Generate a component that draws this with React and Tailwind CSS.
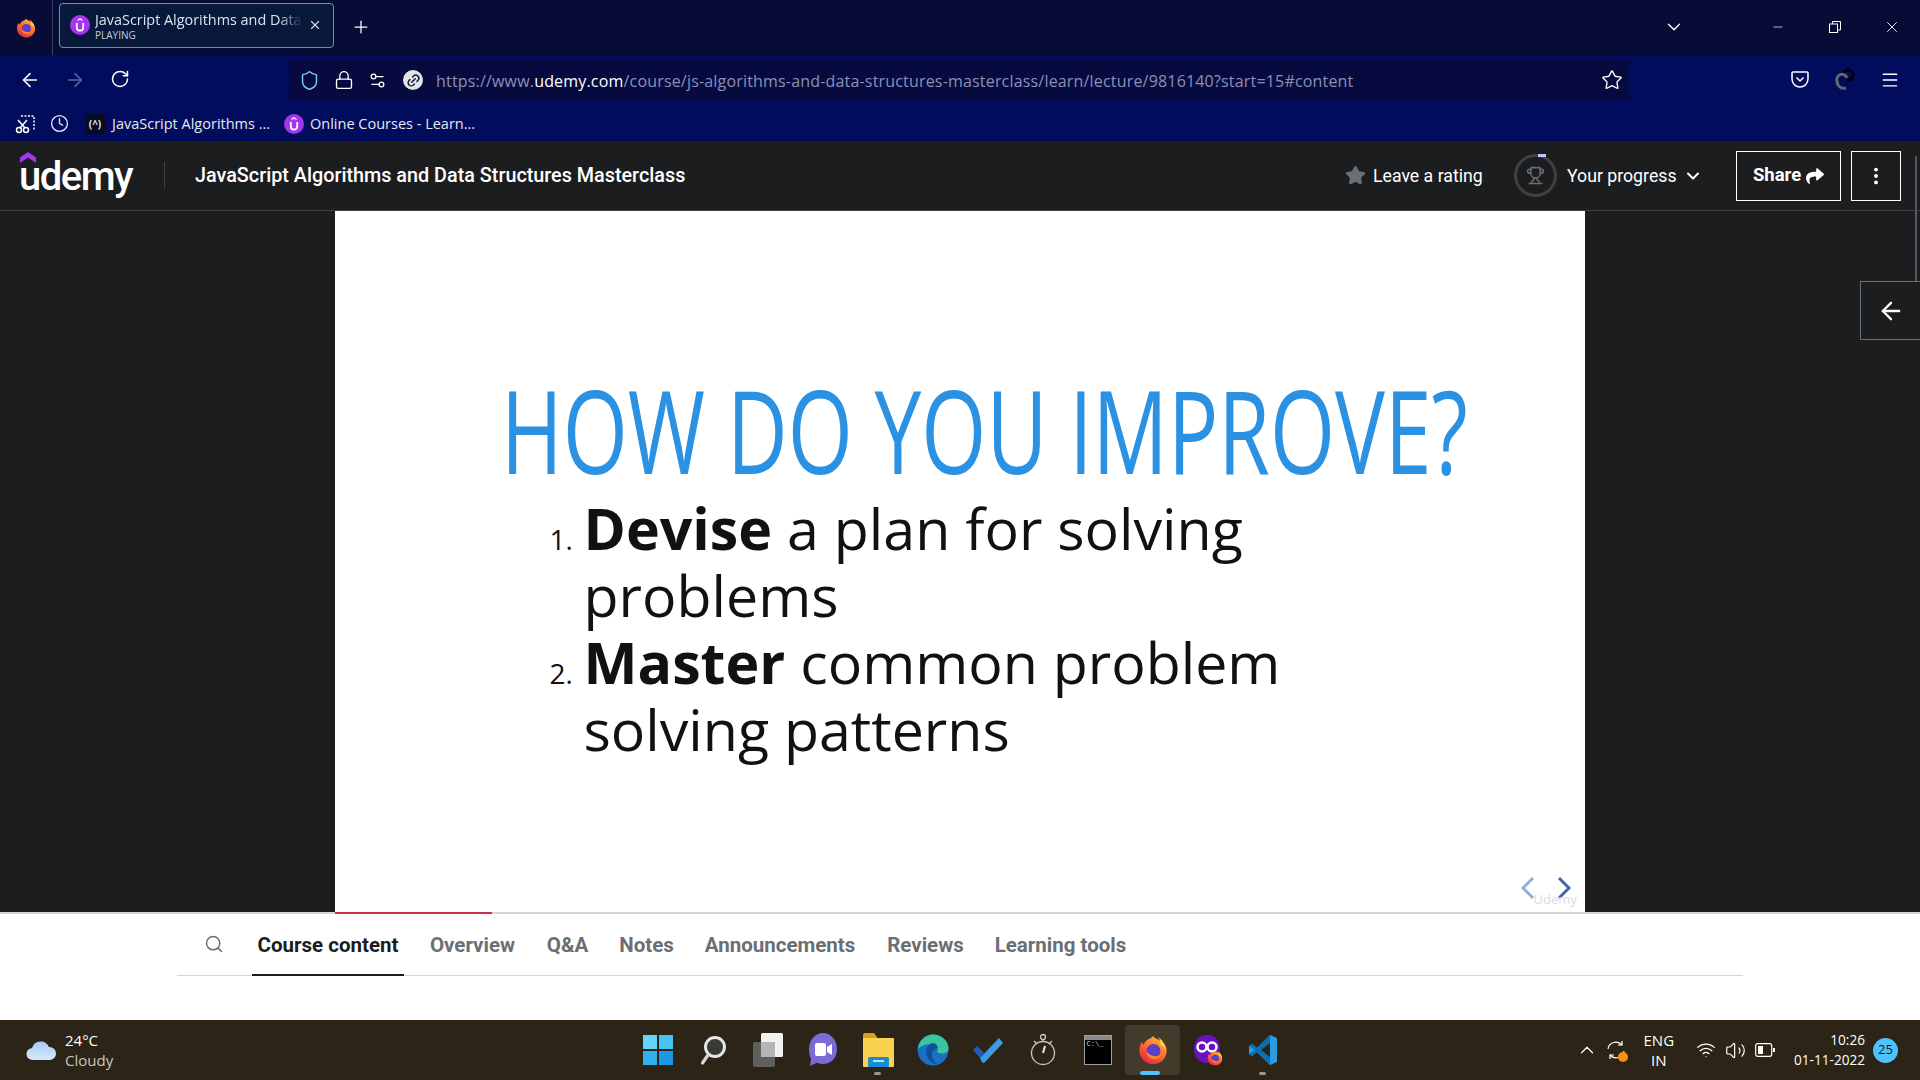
import React from "react";
import {
  ArrowLeft,
  ArrowRight,
  RotateCw,
  Shield,
  Lock,
  Star,
  Menu,
  ChevronDown,
  ChevronUp,
  X,
  Plus,
  Minus,
  Search,
  Trophy,
  EllipsisVertical,
  Wifi,
  Volume2,
  Link2,
  Clock,
  Settings2,
} from "lucide-react";
import { FaShare } from "react-icons/fa";

const tabs = [
  { label: "Course content", width: "w-[152px]", active: true },
  { label: "Overview", width: "w-[87px]", gap: "ml-[25px]" },
  { label: "Q&A", width: "w-[43px]", gap: "ml-[30px]" },
  { label: "Notes", width: "w-[55px]", gap: "ml-[30px]" },
  { label: "Announcements", width: "w-[154px]", gap: "ml-[29px]" },
  { label: "Reviews", width: "w-[77px]", gap: "ml-[30px]" },
  { label: "Learning tools", width: "w-[133px]", gap: "ml-[30px]" },
];

// Purple udemy favicon used in tab and bookmark bar
const UdemyDot = () => (
  <div className="w-5 h-5 rounded-full bg-[#a435f0] flex items-center justify-center shrink-0">
    <svg width="10" height="14" viewBox="0 0 10 14" fill="none" stroke="white">
      <path d="M2.500 2.500 5 .8l2.500 1.700" strokeWidth="1.200" />
      <path d="M1.800 5v4.500a3.200 3.200 0 0 0 6.400 0V5" strokeWidth="1.800" />
    </svg>
  </div>
);

const SnipIcon = () => (
  <svg width="20" height="20" viewBox="0 0 20 20" fill="none" stroke="white" strokeWidth="1.500">
    <path d="M6 2h13v15" strokeDasharray="2 1.500" />
    <circle cx="4" cy="16" r="2.500" />
    <circle cx="11" cy="16" r="2.500" />
    <path d="M5 14 12 6M10 14 3 6" />
  </svg>
);

const FirefoxIcon = ({ size = 30 }) => (
  <svg width={size} height={size} viewBox="0 0 32 32">
    <defs>
      <linearGradient id="ffa" x1="0.8" y1="0" x2="0.2" y2="1">
        <stop offset="0" stopColor="#ffbd2e" />
        <stop offset="0.5" stopColor="#ff6a2b" />
        <stop offset="1" stopColor="#e5224b" />
      </linearGradient>
    </defs>
    <path d="M16 31C7.500 31 1.500 24.500 1.500 16.500c0-3.500 1-6.500 2.700-9 .3 1.500.9 2.500 1.700 3 .8-2.500 2.500-4.500 4.800-5.800 1.800-1 3.700-1.500 5.500-3.700 1.200 2.500 5.500 3.500 8.500 5.500 3.800 2.500 5.800 6.500 5.800 10.500C30.500 24.500 24.500 31 16 31z" fill="url(#ffa)" />
    <path d="M21 2c3 3 3.500 6 2.500 8.500 3 1.500 5 2.500 6.500 6-.5-5-3-11-9-14.500z" fill="#ffd43b" />
    <circle cx="16.500" cy="17" r="7.500" fill="#5b3fc4" />
    <path d="M9 17c0 6 5 9.500 10 8.500 3-.6 5.500-3 6-5.500-2 2.500-6 3.500-9.500 2C12 20.500 10 19 9 17z" fill="#ff8a2b" />
  </svg>
);

const WindowsIcon = () => (
  <div className="grid grid-cols-2 gap-[2px] w-[30px] h-[30px]">
    <div className="bg-[#62d6fa]" />
    <div className="bg-[#45c3f5]" />
    <div className="bg-[#2fb0f0]" />
    <div className="bg-[#1b98e6]" />
  </div>
);

const TaskSearchIcon = () => (
  <svg width="30" height="32" viewBox="0 0 30 32" fill="none">
    <circle cx="17" cy="13" r="9.500" fill="#3a3a34" stroke="#e6e6e6" strokeWidth="3" />
    <path d="M10 21 4.500 29" stroke="#d8d8d8" strokeWidth="3.200" strokeLinecap="round" />
  </svg>
);

const TaskViewIcon = () => (
  <svg width="32" height="36" viewBox="0 0 32 36">
    <rect x="9" y="1" width="22" height="24" rx="1.500" fill="#f2f2f2" />
    <rect x="1" y="10" width="22" height="25" rx="1.500" fill="#5f5f5f" />
    <rect x="9" y="10" width="14" height="15" fill="#b5b5b5" />
  </svg>
);

const ChatIcon = () => (
  <svg width="30" height="36" viewBox="0 0 30 36">
    <path d="M15 1c8 0 14 7 14 16s-6 15-14 15c-2 0-4-.4-6-1.300L2 34l1-7C1.500 24 1 20.500 1 17 1 8 7 1 15 1z" fill="#7b6bd6" />
    <rect x="7" y="11" width="11" height="13" rx="2" fill="#fff" />
    <path d="m19 15 5-3v11l-5-3z" fill="#fff" />
  </svg>
);

const ExplorerIcon = () => (
  <svg width="32" height="36" viewBox="0 0 32 36">
    <path d="M1 3a2 2 0 0 1 2-2h9l3 4v8H1z" fill="#d69e1a" />
    <rect x="1" y="6" width="31" height="29" rx="1" fill="#fbd24f" />
    <rect x="6" y="25" width="21" height="10" rx="1.500" fill="#1b8bd8" />
    <rect x="11" y="28" width="11" height="2" fill="#b8e2fb" />
  </svg>
);

const EdgeIcon = () => (
  <svg width="32" height="32" viewBox="0 0 32 32">
    <circle cx="16" cy="16" r="15.500" fill="#1c6fc4" />
    <path d="M1 15C2 6 9 .5 16 .5c8 0 15.500 6 15.500 14 0 3-3 5-6.500 5-3 0-5-1-5-2 2-2 1-6-4-7C10 9.500 4 11 1 15z" fill="#38c6a0" />
    <path d="M16 9c-6 1-8 7-6 13 1.500 4 6 8.500 12 8.500-4-1-7-5-7-10 0-4 3-6 6-7-1-2.500-3-4.500-5-4.500z" fill="#0f4f9c" />
  </svg>
);

const TodoIcon = () => (
  <svg width="32" height="26" viewBox="0 0 32 26">
    <path d="m1 13 4-4 7 7-4 5z" fill="#1c5bb8" />
    <path d="M8 21 27 1l4 5L13 25a2 2 0 0 1-3 0z" fill="#3c9be8" />
  </svg>
);

const TimerIcon = () => (
  <svg width="26" height="34" viewBox="0 0 26 34" fill="none" stroke="#c8c8c8" strokeWidth="1.300">
    <circle cx="13" cy="20" r="11.500" />
    <circle cx="13" cy="4" r="2.500" />
    <path d="M13 7v2M4 8l3 3M22 8l-3 3" />
    <path d="m13 20 2-7" stroke="#e8e8e8" strokeWidth="2" />
  </svg>
);

const CmdIcon = () => (
  <div className="h-[30px] border border-[#9b9b9b] bg-black w-[28px]">
    <div className="h-[4px] bg-[#8a8a8a]" />
    <div className="text-[7px] leading-[9px] text-[#cfcfcf] pl-[2px] font-['Liberation_Mono',monospace]">C:\_</div>
  </div>
);

const MaskIcon = () => (
  <div className="relative w-[30px] h-[32px]">
    <svg width="28" height="30" viewBox="0 0 28 30">
      <path d="M14 1c8 0 13 6 13 14s-5 14-13 14S1 23 1 15 6 1 14 1z" fill="#6a12c0" />
      <circle cx="9" cy="13" r="4.500" fill="none" stroke="#fff" strokeWidth="2.500" />
      <circle cx="19" cy="13" r="4.500" fill="none" stroke="#fff" strokeWidth="2.500" />
    </svg>
    <div className="absolute right-0 bottom-0">
      <FirefoxIcon size={16} />
    </div>
  </div>
);

const VsCodeIcon = () => (
  <svg width="30" height="32" viewBox="0 0 30 32">
    <path d="M22 1 29 4v24l-7 3L9 18l-5 4-3-2v-8l3-2 5 4z" fill="#2a9de0" />
    <path d="M22 1 9 14 4 10l-3 2 6 4-6 4 3 2 5-4 13 13z" fill="#0b6fb8" />
    <path d="M22 9v14l-9-7z" fill="#2c2416" />
  </svg>
);

const taskIcons = [
  { key: "start", node: <WindowsIcon /> },
  { key: "search", node: <TaskSearchIcon /> },
  { key: "view", node: <TaskViewIcon /> },
  { key: "chat", node: <ChatIcon /> },
  { key: "explorer", node: <ExplorerIcon />, dot: true },
  { key: "edge", node: <EdgeIcon /> },
  { key: "todo", node: <TodoIcon /> },
  { key: "timer", node: <TimerIcon /> },
  { key: "cmd", node: <CmdIcon /> },
  { key: "firefox", node: <FirefoxIcon />, active: true },
  { key: "mask", node: <MaskIcon /> },
  { key: "vscode", node: <VsCodeIcon />, dot: true },
];

const BrowserChrome = () => (
  <div className="font-['Open_Sans',sans-serif] text-white">
    {/* title bar */}
    <div className="h-[55px] bg-[#070c36] flex items-center">
      <div className="w-[53px] h-full flex items-center justify-center border-r border-[#3a3e5f]">
        <FirefoxIcon size={20} />
      </div>
      <div className="ml-[6px] w-[275px] h-[45px] rounded-[4px] border border-[#6f8cc9] bg-[#07183a] flex items-center pl-[10px] mb-[5px]">
        <UdemyDot />
        <div className="ml-[5px] w-[208px] overflow-hidden whitespace-nowrap pt-[2px]">
          <div className="text-[14.4px] leading-[18px] text-[#dfe3ee] [mask-image:linear-gradient(to_right,black_88%,transparent)]">JavaScript Algorithms and Data</div>
          <div className="text-[10px] leading-[12px] text-[#c6cbdc]">PLAYING</div>
        </div>
        <X size={14} className="ml-[5px] text-[#d5d8e2]" />
      </div>
      <Plus size={20} strokeWidth={1.500} className="ml-[17px] mb-[2px]" />
      <ChevronDown size={22} strokeWidth={1.500} className="ml-[1292px] mb-[2px]" />
      <Minus size={14} strokeWidth={1.200} className="ml-[86px] mb-[2px]" />
      <svg width="14" height="14" viewBox="0 0 14 14" fill="none" stroke="white" className="ml-[43px] mb-[2px]">
        <rect x="1.500" y="4" width="8" height="8.500" />
        <path d="M4.500 4V1.500h8V10H9.500" />
      </svg>
      <X size={18} strokeWidth={1.200} className="ml-[41px] mb-[2px]" />
    </div>

    {/* toolbar */}
    <div className="h-[55px] bg-[#020c5c] flex items-center pb-[5px]">
      <div className="w-[143px] pl-[7px] flex">
        <div className="w-[45px] flex justify-center"><ArrowLeft size={22} strokeWidth={1.700} /></div>
        <div className="w-[45px] flex justify-center"><ArrowRight size={22} strokeWidth={1.700} className="text-[#5e64a0]" /></div>
        <div className="w-[45px] flex justify-center"><RotateCw size={20} strokeWidth={1.800} /></div>
      </div>
      <div className="ml-[146px] w-[1341px] h-[40px] rounded-[4px] bg-[#060a3f] flex items-center">
        <Shield size={21} strokeWidth={1.700} className="ml-[10px] text-[#7cc8f5]" />
        <Lock size={20} strokeWidth={1.600} className="ml-[14px]" />
        <Settings2 size={19} strokeWidth={1.600} className="ml-[14px]" />
        <div className="ml-[16px] w-5 h-5 rounded-full bg-[#e4e4e8] flex items-center justify-center">
          <Link2 size={15} strokeWidth={2.400} className="text-[#15183f] -rotate-45" />
        </div>
        <div className="ml-[13px] pt-[2px] text-[16px] tracking-[0.18px] text-[#8b91b5] whitespace-nowrap w-[1140px]">
          https://www.<span className="text-white">udemy.com</span>/course/js-algorithms-and-data-structures-masterclass/learn/lecture/9816140?start=15#content
        </div>
        <Star size={22} strokeWidth={1.500} className="ml-auto mr-[7px]" />
      </div>
      <svg width="18" height="20" viewBox="0 0 18 20" fill="none" stroke="white" strokeWidth="1.500" className="ml-[161px]">
        <path d="M2 2h14a1 1 0 0 1 1 1v6a8 8 0 0 1-16 0V3a1 1 0 0 1 1-1z" />
        <path d="m5.500 7.500 3.500 3.500 3.500-3.500" />
      </svg>
      <svg width="20" height="24" viewBox="0 0 20 24" fill="none" strokeWidth="3" className="ml-[26px]">
        <path d="M8 7a5 5 0 0 1 10 0 5 5 0 0 1-6 5" stroke="#000" />
        <path d="M12 10a5 5 0 0 0-10 3 7 7 0 0 0 9 7" stroke="#61666f" />
      </svg>
      <Menu size={20} strokeWidth={1.700} className="ml-[25px]" />
    </div>

    {/* bookmarks */}
    <div className="h-[31px] bg-[#020c5c] flex items-center pl-[15px] pb-[4px] text-[14.5px] text-[#e6e8f2] whitespace-nowrap">
      <SnipIcon />
      <Clock size={19} strokeWidth={1.700} className="ml-[15px]" />
      <div className="ml-[16px] w-5 h-5 bg-[#0a0a23] text-[10px] leading-5 text-center font-bold">(^)</div>
      <span className="ml-[7px] w-[172px]">JavaScript Algorithms ...</span>
      <UdemyDot />
      <span className="ml-[6px]">Online Courses - Learn...</span>
    </div>
  </div>
);

const CourseHeader = () => (
  <div className="h-[70px] bg-[#1c1d1f] border-b border-[#3e4143] flex items-center text-white font-['Roboto',sans-serif]">
    <div className="relative ml-[19px] w-[114px] h-[50px] flex items-center">
      <svg width="16" height="11" viewBox="0 0 16 11" className="absolute left-[1px] top-[1px]">
        <path d="M8 0 16 5.500V11L8 5.500 0 11V5.500z" fill="#a435f0" />
      </svg>
      <span className="font-medium text-[40px] leading-[50px] tracking-[-1.500px] mt-[3px]">udemy</span>
    </div>
    <div className="ml-[31px] h-[27px] w-px bg-[#3e4143]" />
    <span className="ml-[30px] font-medium text-[19.8px] whitespace-nowrap mt-[1px]">
      JavaScript Algorithms and Data Structures Masterclass
    </span>
    <Star size={21} fill="#6a6f73" stroke="#6a6f73" className="ml-auto" />
    <span className="ml-[7px] mt-[1px] text-[17.7px] w-[109px] whitespace-nowrap">Leave a rating</span>
    <div className="relative ml-[32px] w-[43px] h-[43px] rounded-full border-[3px] border-[#3e4143] flex items-center justify-center">
      <Trophy size={19} className="text-[#6a6f73]" />
      <div className="absolute -top-[3px] left-[21px] w-[8px] h-[3px] bg-[#c0c4fc]" />
    </div>
    <span className="ml-[10px] mt-[1px] text-[17.7px] w-[110px] whitespace-nowrap">Your progress</span>
    <ChevronDown size={20} strokeWidth={2.400} className="ml-[6px]" />
    <div className="ml-[33px] w-[105px] h-[50px] border border-white flex items-center justify-center font-bold text-[18.5px]">
      Share
      <FaShare size={18} className="ml-[5px]" />
    </div>
    <div className="ml-[10px] mr-[19px] w-[50px] h-[50px] border border-white flex items-center justify-center">
      <EllipsisVertical size={22} strokeWidth={2.200} />
    </div>
  </div>
);

const Slide = () => (
  <div className="relative w-[1250px] h-[701px] bg-white overflow-hidden">
    <h1 className="mt-[174px] ml-[166px] w-[900px] h-[90px] origin-left scale-x-[0.728] text-[115px] leading-[90px] font-normal text-[#2b91e2] font-['Open_Sans',sans-serif] whitespace-nowrap">
      HOW DO YOU IMPROVE?
    </h1>
    <div className="ml-[215px] mt-[20px] font-['Open_Sans',sans-serif] text-[57.3px] leading-[67px] text-[#111]">
      <div className="flex items-baseline">
        <span className="w-[34px] text-[28px]">1.</span>
        <p>
          <b>Devise</b> a plan for solving
          <br />
          problems
        </p>
      </div>
      <div className="flex items-baseline">
        <span className="w-[34px] text-[28px]">2.</span>
        <p>
          <b>Master</b> common problem
          <br />
          solving patterns
        </p>
      </div>
    </div>
    <svg width="50" height="24" viewBox="0 0 50 24" fill="none" strokeWidth="3" className="absolute left-[1186px] top-[665px]">
      <path d="M12 2 2 12l10 10" stroke="#8db0de" />
      <path d="m38 2 10 10-10 10" stroke="#3c68aa" />
    </svg>
    <span className="absolute left-[1199px] top-[679px] text-[13px] text-[#dcdcdc] font-['Open_Sans',sans-serif]">Udemy</span>
  </div>
);

const LectureTabs = () => (
  <div className="h-[106px] bg-white pl-[177px]">
    <div className="w-[1566px] h-[62px] border-b border-[#d1d7dc] flex items-end">
      <div className="w-[75px] h-full flex items-center pl-[27px] pb-[1px]">
        <Search size={20} strokeWidth={1.800} className="text-[#6a6f73]" />
      </div>
      {tabs.map((tab) => (
        <div
          key={tab.label}
          className={`${tab.width} ${tab.gap || ""} h-[62px] pt-[2px] flex items-center justify-center whitespace-nowrap text-[20.5px] font-bold font-['Roboto',sans-serif] ${
            tab.active ? "text-[#1c1d1f] border-b-2 border-[#1c1d1f] -mb-px" : "text-[#6a6f73]"
          }`}
        >
          {tab.label}
        </div>
      ))}
    </div>
  </div>
);

const Taskbar = () => (
  <div className="h-[60px] bg-[#2c2416] text-white grid grid-cols-[1fr_auto_1fr] items-center font-['Open_Sans',sans-serif]">
    <div className="flex items-center pl-[26px]">
      <svg width="31" height="21" viewBox="0 0 31 21">
        <defs>
          <linearGradient id="cloud" x1="0" y1="0" x2="0" y2="1">
            <stop offset="0" stopColor="#a8c8f5" />
            <stop offset="1" stopColor="#d8e8fb" />
          </linearGradient>
        </defs>
        <path d="M7 20a6 6 0 0 1-1-12 9 9 0 0 1 17-1 6.500 6.500 0 0 1 1 13z" fill="url(#cloud)" />
      </svg>
      <div className="ml-[8px] text-[15px] leading-[20px]">
        <div>24°C</div>
        <div className="text-[#c9c6bf]">Cloudy</div>
      </div>
    </div>
    <div className="flex">
      {taskIcons.map((icon) => (
        <div
          key={icon.key}
          className={`relative w-[55px] h-[50px] flex items-center justify-center rounded-[4px] ${icon.active ? "bg-[#423b2c]" : ""}`}
        >
          {icon.node}
          {icon.dot && <div className="absolute bottom-0 left-[24px] w-[7px] h-[3px] rounded-full bg-[#9a968e]" />}
          {icon.active && <div className="absolute bottom-0 left-[15px] w-[20px] h-[4px] rounded-full bg-[#4cc2ff]" />}
        </div>
      ))}
    </div>
    <div className="flex items-center justify-end pr-[22px]">
      <ChevronUp size={22} strokeWidth={1.300} />
      <div className="relative ml-[8px] w-[20px] h-[20px]">
        <svg width="20" height="20" viewBox="0 0 20 20" fill="none" stroke="white" strokeWidth="1.200">
          <path d="M2 9a8 8 0 0 1 14-4M18 11a8 8 0 0 1-14 4" />
          <path d="M16 1v4h-4M4 19v-4h4" />
        </svg>
        <div className="absolute right-[-2px] bottom-[-2px] w-[10px] h-[10px] rounded-full bg-[#f7930e]" />
      </div>
      <div className="ml-[18px] text-[15px] leading-[20px] text-center">
        <div>ENG</div>
        <div>IN</div>
      </div>
      <Wifi size={20} strokeWidth={1.500} className="ml-[22px]" />
      <Volume2 size={21} strokeWidth={1.400} className="ml-[9px]" />
      <svg width="20" height="14" viewBox="0 0 20 14" fill="none" className="ml-[9px]">
        <rect x="0.700" y="0.700" width="16" height="12.600" rx="2" stroke="white" strokeWidth="1.200" />
        <rect x="3" y="3" width="5" height="8" fill="white" />
        <rect x="18" y="5" width="2" height="4" fill="white" />
      </svg>
      <div className="ml-[19px] text-[13.6px] leading-[20px] text-right">
        <div>10:26</div>
        <div>01-11-2022</div>
      </div>
      <div className="ml-[8px] w-[25px] h-[25px] rounded-full bg-[#4cc2ff] text-[#1a1a1a] text-[13px] flex items-center justify-center">25</div>
    </div>
  </div>
);

const App = () => {
  return (
    <div className="relative w-[1920px] h-[1080px] overflow-hidden bg-white">
      <BrowserChrome />
      <CourseHeader />
      <div className="bg-[#1c1d1f] flex justify-center pr-[1px]">
        <Slide />
      </div>
      <div className="h-[2px] bg-[#d1d7dc] pl-[335px]">
        <div className="w-[157px] h-full bg-[#c8314a]" />
      </div>
      <LectureTabs />
      <Taskbar />

      {/* page scrollbar and sidebar toggle sit over the player */}
      <div className="absolute right-[3px] top-[156px] w-[2px] h-[141px] bg-[#55585c]" />
      <div className="absolute right-0 top-[281px] w-[60px] h-[59px] bg-[#1c1d1f] border border-r-0 border-[#6a6f73] flex items-center justify-center text-white">
        <ArrowLeft size={28} strokeWidth={2} />
      </div>
    </div>
  );
};

export default App;
